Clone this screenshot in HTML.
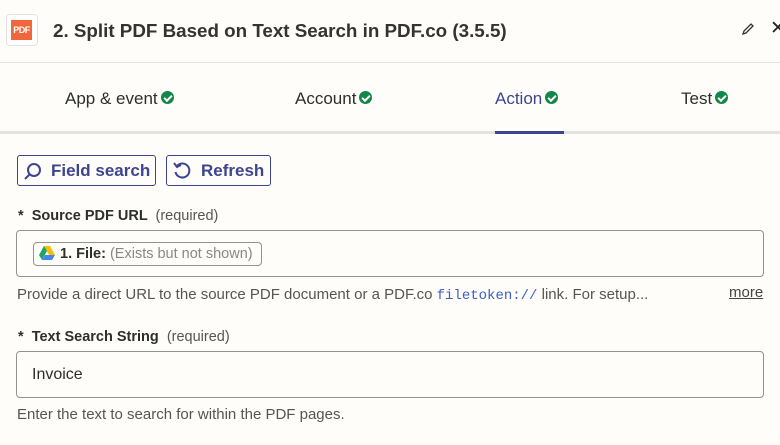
<!DOCTYPE html>
<html><head><style>
*{margin:0;padding:0;box-sizing:border-box}
body{width:780px;height:445px;background:#fffdf9;font-family:"Liberation Sans",sans-serif;color:#2d2e2e;position:relative;overflow:hidden}
.a{position:absolute}
.chk{display:inline-block;width:13px;height:13px;border-radius:50%;background:#138649;vertical-align:middle;position:relative;margin-left:3px;top:-2px}
.chk:after{content:"";position:absolute;left:3px;top:3.5px;width:6px;height:3px;border-left:2px solid #fff;border-bottom:2px solid #fff;transform:rotate(-45deg)}
.tab{font-size:17px;top:89px}
.btn{border:1px solid #3d4592;border-radius:3px;height:31px;top:155px;color:#3d4592;font-weight:bold;font-size:17px;line-height:29px}
.lbl{font-size:14.5px;font-weight:bold}
.lbl span{font-weight:normal;color:#555}
.box{border:1px solid #95928e;border-radius:4px;background:#fffdf9}
.help{font-size:15px;color:#555}
</style></head><body>
<div class="a" style="left:6px;top:14px;width:32px;height:32px;border:1px solid #e4e2de;border-radius:4px;background:#fff"></div>
<div class="a" style="left:11px;top:20px;width:21px;height:20px;background:#f2663b;color:#fff;font-size:9px;font-weight:bold;line-height:20px;text-align:center;letter-spacing:-.5px">PDF</div>
<div class="a" style="left:53px;top:20px;font-size:18.8px;font-weight:bold;color:#333">2. Split PDF Based on Text Search in PDF.co (3.5.5)</div>
<svg class="a" style="left:741px;top:22px" width="14" height="14" viewBox="0 0 14 14"><path d="M2 12 L3 9 L10 2 L12 4 L5 11 Z" fill="none" stroke="#333" stroke-width="1.3"/></svg>
<div class="a" style="left:770px;top:17px;font-size:19px;color:#222">✕</div>
<div class="a" style="left:0;top:62px;width:780px;height:1px;background:#e4e2de"></div>
<div class="a tab" style="left:65px">App &amp; event<span class="chk"></span></div>
<div class="a tab" style="left:295px">Account<span class="chk"></span></div>
<div class="a tab" style="left:495px;color:#3d4592">Action<span class="chk"></span></div>
<div class="a tab" style="left:681px">Test<span class="chk"></span></div>
<div class="a" style="left:0;top:131px;width:780px;height:3px;background:#e4e2de"></div>
<div class="a" style="left:495px;top:131px;width:69px;height:3px;background:#3d4592"></div>
<div class="a btn" style="left:17px;width:139px;padding-left:33px">Field search</div>
<svg class="a" style="left:23px;top:161px" width="20" height="20" viewBox="0 0 20 20"><circle cx="11" cy="9" r="6" fill="none" stroke="#3d4592" stroke-width="2"/><path d="M6.5 13.5 L2 18" stroke="#3d4592" stroke-width="2"/></svg>
<div class="a btn" style="left:166px;width:105px;padding-left:34px">Refresh</div>
<svg class="a" style="left:171px;top:160px" width="22" height="22" viewBox="0 0 22 22"><path d="M6 6 A7 7 0 1 1 4.5 12" fill="none" stroke="#3d4592" stroke-width="2"/><path d="M3 3 L6 7 L10 5" fill="none" stroke="#3d4592" stroke-width="2"/></svg>
<div class="a lbl" style="left:18px;top:208px">*&nbsp; Source PDF URL &nbsp;<span>(required)</span></div>
<div class="a box" style="left:16px;top:230px;width:748px;height:47px"></div>
<div class="a" style="left:33px;top:242px;width:229px;height:24px;border:1px solid #95928e;border-radius:4px;font-size:14.5px;line-height:22px;padding-left:26px"><b>1. File:</b> <span style="color:#888">(Exists but not shown)</span></div>
<svg class="a" style="left:39px;top:246px" width="16" height="14" viewBox="0 0 16 14"><path d="M5 0 H11 L16 9 H10 Z" fill="#fbbc04"/><path d="M5 0 L0 9 L3 14 L8 5 Z" fill="#1fa463"/><path d="M3 14 H13 L16 9 H6 Z" fill="#4285f4"/></svg>
<div class="a help" style="left:17px;top:286px">Provide a direct URL to the source PDF document or a PDF.co <span style="font-family:'Liberation Mono',monospace;color:#3b5fc4;font-size:14px">filetoken://</span> link. For setup...</div>
<div class="a help" style="left:729px;top:284px;text-decoration:underline;color:#444">more</div>
<div class="a lbl" style="left:18px;top:329px">*&nbsp; Text Search String &nbsp;<span>(required)</span></div>
<div class="a box" style="left:16px;top:351px;width:748px;height:47px"></div>
<div class="a" style="left:32px;top:366px;font-size:16px">Invoice</div>
<div class="a help" style="left:17px;top:406px">Enter the text to search for within the PDF pages.</div>
</body></html>
